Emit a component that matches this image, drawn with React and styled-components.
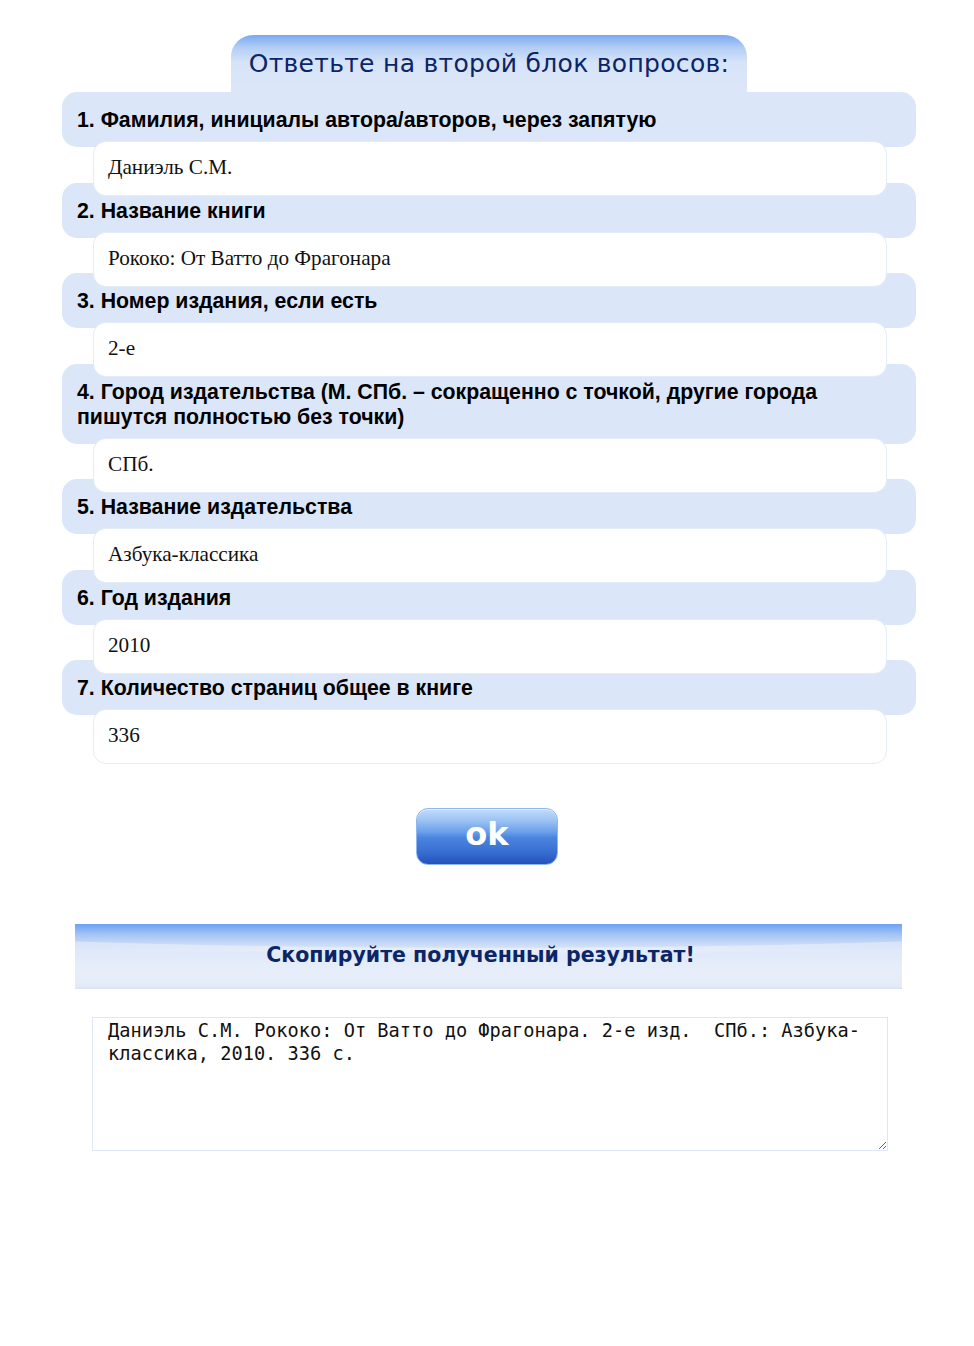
import React from "react";
import styled, { createGlobalStyle } from "styled-components";

const Global = createGlobalStyle`
  html, body { margin: 0; padding: 0; background: #ffffff; }
  body { font-family: "Liberation Sans", Arial, sans-serif; }
`;

const Page = styled.div`
  width: 854px;
  margin-left: 62px;
  padding-top: 35px;
  display: flex;
  flex-direction: column;
`;

const Tab = styled.div`
  align-self: center;
  width: 516px;
  height: 57px;
  box-sizing: border-box;
  border-radius: 22px 22px 0 0;
  background: linear-gradient(180deg, #78a9f2 0%, #b2cdf5 22%, #d6e3f8 48%, #dce6f7 100%);
  display: flex;
  align-items: center;
  justify-content: center;
  padding-bottom: 1px;
  font-family: "DejaVu Sans", Verdana, sans-serif;
  font-size: 25px;
  color: #0c2566;
  letter-spacing: 0.3px;
`;

const Questions = styled.div`
  display: flex;
  flex-direction: column;
`;

const Block = styled.div`
  position: relative;
  z-index: 0;
  background: #dbe6f8;
  border-radius: 15px;
  padding: 16px 15px 14px 15px;
  margin-top: ${(p) => (p.$first ? "0" : "-13.5px")};
  font-family: "Liberation Sans", Arial, sans-serif;
  font-weight: bold;
  font-size: 21.3px;
  line-height: 25px;
  color: #000;
`;

const Field = styled.div`
  position: relative;
  z-index: 1;
  margin: -6px 29px 0 31px;
  height: 55px;
  box-sizing: border-box;
  background: #ffffff;
  border: 1px solid #e4ecf8;
  border-radius: 13px;
  padding: 0 14px 2px 14px;
  display: flex;
  align-items: center;
  font-family: "Liberation Serif", "Times New Roman", serif;
  font-size: 21.2px;
  color: #111;
`;

const OkButton = styled.button`
  align-self: center;
  margin-top: 44px;
  margin-right: 4px;
  width: 142px;
  height: 57px;
  border-radius: 12px;
  border: 1px solid #8fb6ee;
  background: linear-gradient(180deg, #c2dbfa 0%, #9ec4f4 20%, #6a9fea 42%, #4a85de 52%, #3a72d4 75%, #2452be 100%);
  color: #ffffff;
  font-family: "DejaVu Sans", Verdana, sans-serif;
  font-weight: bold;
  font-size: 32px;
  line-height: 1;
  padding: 0 0 5px 0;
  cursor: pointer;
  box-shadow: inset 0 1px 0 rgba(255,255,255,0.6);
`;

const Banner = styled.div`
  margin: 59px 14px 0 13px;
  height: 65px;
  box-sizing: border-box;
  background:
    radial-gradient(ellipse 120% 60% at 50% 0%, rgba(255,255,255,0) 60%, rgba(255,255,255,0.35) 62%, rgba(255,255,255,0) 80%),
    linear-gradient(180deg, #6ca1f5 0%, #a9c7f4 18%, #dfe8f9 40%, #e7eefa 70%, #e5ecf9 94%, #dbe4f4 100%);
  display: flex;
  align-items: center;
  justify-content: center;
  padding-bottom: 3px;
  padding-right: 16px;
  font-family: "DejaVu Sans", Verdana, sans-serif;
  font-weight: bold;
  font-size: 20.5px;
  color: #0c2566;
`;

const Result = styled.textarea`
  margin: 28px 28px 0 30px;
  height: 134px;
  box-sizing: border-box;
  border: 1px solid #dde7f5;
  border-radius: 0;
  padding: 1px 14px 0 15px;
  font-family: "DejaVu Sans Mono", "Liberation Mono", monospace;
  font-size: 18.65px;
  line-height: 23px;
  color: #111;
  background: #fff;
  resize: both;
  outline: none;
`;

const questions = [
  ["1. Фамилия, инициалы автора/авторов, через запятую", "Даниэль С.М."],
  ["2. Название книги", "Рококо: От Ватто до Фрагонара"],
  ["3. Номер издания, если есть", "2-е"],
  ["4. Город издательства (М. СПб. – сокращенно с точкой, другие города пишутся полностью без точки)", "СПб."],
  ["5. Название издательства", "Азбука-классика"],
  ["6. Год издания", "2010"],
  ["7. Количество страниц общее в книге", "336"],
];

export default function App() {
  return (
    <>
      <Global />
      <Page>
        <Tab>Ответьте на второй блок вопросов:</Tab>
        <Questions>
          {questions.map(([q, a], i) => (
            <React.Fragment key={i}>
              <Block $first={i === 0}>{q}</Block>
              <Field>{a}</Field>
            </React.Fragment>
          ))}
        </Questions>
        <OkButton>ok</OkButton>
        <Banner>Скопируйте полученный результат!</Banner>
        <Result
          readOnly
          value="Даниэль С.М. Рококо: От Ватто до Фрагонара. 2-е изд.  СПб.: Азбука-классика, 2010. 336 с."
        />
      </Page>
    </>
  );
}
